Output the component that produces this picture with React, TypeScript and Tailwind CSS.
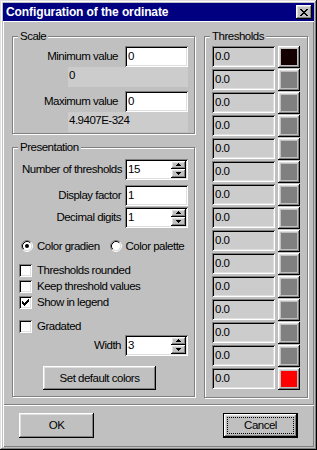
import React from 'react';

// win98 bevels
const sunken =
  'shadow-[inset_1px_1px_0_#808080,inset_-1px_-1px_0_#ffffff,inset_2px_2px_0_#000000,inset_-2px_-2px_0_#dfdfdf]';
const raised =
  'shadow-[inset_-1px_-1px_0_#000000,inset_1px_1px_0_#ffffff,inset_-2px_-2px_0_#808080,inset_2px_2px_0_#dfdfdf]';

const Group: React.FC<{ title: string; className?: string; children: React.ReactNode }> = ({
  title,
  className = '',
  children,
}) => (
  <div
    className={`relative border border-[#808080] shadow-[inset_1px_1px_0_#ffffff,1px_1px_0_#ffffff] ${className}`}
  >
    <span className="absolute left-[5px] -top-[8px] bg-[#c0c0c0] px-[2px] leading-[14px]">{title}</span>
    {children}
  </div>
);

const Edit: React.FC<{ value: string }> = ({ value }) => (
  <div className={`w-[63px] h-[21px] bg-white flex items-center pl-[3px] ${sunken}`}>{value}</div>
);

const Arrow: React.FC<{ up?: boolean }> = ({ up }) => (
  <svg width="7" height="4" viewBox="0 0 7 4" shapeRendering="crispEdges">
    {up ? <path d="M3 0h1v1h-1zM2 1h3v1h-3zM1 2h5v1h-5z" fill="#000" /> : <path d="M1 0h5v1h-5zM2 1h3v1h-3zM3 2h1v1h-1z" fill="#000" />}
  </svg>
);

const SpinEdit: React.FC<{ value: string }> = ({ value }) => (
  <div className={`w-[63px] h-[21px] bg-white flex items-center pl-[3px] pr-[2px] ${sunken}`}>
    <span className="flex-1">{value}</span>
    <div className="flex flex-col w-[15px] h-[17px]">
      <div className={`h-[8px] bg-[#c0c0c0] flex items-center justify-center ${raised}`}>
        <Arrow up />
      </div>
      <div className={`h-[9px] bg-[#c0c0c0] flex items-center justify-center ${raised}`}>
        <Arrow />
      </div>
    </div>
  </div>
);

const Radio: React.FC<{ checked?: boolean }> = ({ checked }) => (
  <svg width="12" height="12" viewBox="0 0 12 12">
    <circle cx="6" cy="6" r="4.5" fill="#fff" />
    <path d="M2.11 9.89A5.5 5.5 0 0 1 9.89 2.11" stroke="#808080" fill="none" />
    <path d="M9.89 2.11A5.5 5.5 0 0 1 2.11 9.89" stroke="#fff" fill="none" />
    <path d="M2.82 9.18A4.5 4.5 0 0 1 9.18 2.82" stroke="#000" fill="none" />
    <path d="M9.18 2.82A4.5 4.5 0 0 1 2.82 9.18" stroke="#dfdfdf" fill="none" />
    {checked && <circle cx="6" cy="6" r="2" fill="#000" />}
  </svg>
);

const Check: React.FC<{ label: string; checked?: boolean; className?: string }> = ({
  label,
  checked,
  className = '',
}) => (
  <div className={`flex items-center h-[16px] ${className}`}>
    <div className={`w-[13px] h-[13px] bg-white flex items-center justify-center ${sunken}`}>
      {checked && (
        <svg width="7" height="7" viewBox="0 0 7 7" shapeRendering="crispEdges">
          <path
            d="M0 2h1v3h-1zM1 3h1v3h-1zM2 4h1v3h-1zM3 3h1v3h-1zM4 2h1v3h-1zM5 1h1v3h-1zM6 0h1v3h-1z"
            fill="#000"
          />
        </svg>
      )}
    </div>
    <span className="ml-[5px]">{label}</span>
  </div>
);

const swatches = [
  '#140000',
  '#808080',
  '#808080',
  '#808080',
  '#808080',
  '#808080',
  '#808080',
  '#808080',
  '#808080',
  '#808080',
  '#808080',
  '#808080',
  '#808080',
  '#808080',
  '#ff0000',
];

export default function App() {
  return (
    <div className="w-[317px] h-[450px] bg-[#c0c0c0] p-[3px] flex flex-col text-black text-[11.5px] leading-[13px] tracking-[-0.5px] font-['Liberation_Sans',Arial,sans-serif] shadow-[inset_-1px_-1px_0_#000000,inset_1px_1px_0_#dfdfdf,inset_-2px_-2px_0_#808080,inset_2px_2px_0_#ffffff]">
      {/* title bar */}
      <div className="h-[18px] bg-[#000080] flex items-center pl-[3px] pr-[2px]">
        <span className="flex-1 text-white font-bold text-[12px] tracking-[-0.1px]">Configuration of the ordinate</span>
        <div className={`w-[16px] h-[14px] bg-[#c0c0c0] flex items-center justify-center ${raised}`}>
          <svg width="8" height="7" viewBox="0 0 8 7" shapeRendering="crispEdges">
            <path
              d="M0 0h2v1h-2zM6 0h2v1h-2zM1 1h2v1h-2zM5 1h2v1h-2zM2 2h4v1h-4zM3 3h2v1h-2zM2 4h4v1h-4zM1 5h2v1h-2zM5 5h2v1h-2zM0 6h2v1h-2zM6 6h2v1h-2z"
              fill="#000"
            />
          </svg>
        </div>
      </div>

      {/* main panel */}
      <div className="flex-1 flex pl-[9px] pt-[15px] shadow-[inset_1px_1px_0_#ffffff,inset_-1px_-1px_0_#808080]">
        <div className="w-[183px] flex flex-col">
          <Group title="Scale" className="pt-[9px] pr-[6px] pb-[1px] flex flex-col items-end">
            <div className="flex items-center">
              <span className="mr-[7px]">Minimum value</span>
              <Edit value="0" />
            </div>
            <div className="w-[120px] h-[20px] bg-[#cccccc] pl-[1px] pt-[2px]">0</div>
            <div className="flex items-center mt-[4px]">
              <span className="mr-[7px]">Maximum value</span>
              <Edit value="0" />
            </div>
            <div className="w-[120px] h-[20px] bg-[#cccccc] pl-[1px] pt-[2px]">4.9407E-324</div>
          </Group>

          <Group title="Presentation" className="mt-[13px] pt-[11px] pr-[6px] pb-[6px] flex flex-col">
            <div className="flex items-center justify-end">
              <span className="mr-[3px]">Number of thresholds</span>
              <SpinEdit value="15" />
            </div>
            <div className="flex items-center justify-end mt-[5px]">
              <span className="mr-[4px]">Display factor</span>
              <Edit value="1" />
            </div>
            <div className="flex items-center justify-end mt-[1px]">
              <span className="mr-[4px]">Decimal digits</span>
              <SpinEdit value="1" />
            </div>

            <div className="flex items-center h-[16px] mt-[10px] pl-[8px]">
              <Radio checked />
              <span className="ml-[4px]">Color gradien</span>
              <span className="ml-[10px] flex">
                <Radio />
              </span>
              <span className="ml-[4px]">Color palette</span>
            </div>

            <div className="flex flex-col mt-[8px] pl-[6px]">
              <Check label="Thresholds rounded" />
              <Check label="Keep threshold values" />
              <Check label="Show in legend" checked />
              <Check label="Gradated" className="mt-[8px]" />
            </div>

            <div className="flex items-center justify-end mt-[1px]">
              <span className="mr-[4px]">Width</span>
              <SpinEdit value="3" />
            </div>

            <div className={`ml-[30px] mt-[10px] w-[113px] h-[24px] flex items-center justify-center ${raised}`}>
              Set default colors
            </div>
          </Group>
        </div>

        <Group title="Thresholds" className="ml-[9px] w-[104px] mb-[7px] pt-[9px] pl-[7px] flex flex-col gap-[1px]">
          {swatches.map((c, i) => (
            <div key={i} className="flex items-start">
              <div className={`w-[63px] h-[21px] bg-[#cccccc] flex items-center pl-[3px] ${sunken}`}>0.0</div>
              <div className={`ml-[3px] w-[22px] h-[22px] bg-[#c0c0c0] flex items-center justify-center ${raised}`}>
                <div className="w-[16px] h-[16px]" style={{ backgroundColor: c }} />
              </div>
            </div>
          ))}
        </Group>
      </div>

      {/* button panel */}
      <div className="h-[42px] flex items-start justify-between px-[16px] pt-[8px] shadow-[inset_1px_1px_0_#ffffff,inset_-1px_-1px_0_#808080]">
        <div className={`w-[75px] h-[25px] flex items-center justify-center ${raised}`}>OK</div>
        <div className="w-[75px] h-[25px] border border-black">
          <div className={`relative w-full h-full flex items-center justify-center ${raised}`}>
            <div className="absolute inset-[3px] border border-dotted border-black" />
            Cancel
          </div>
        </div>
      </div>
    </div>
  );
}
